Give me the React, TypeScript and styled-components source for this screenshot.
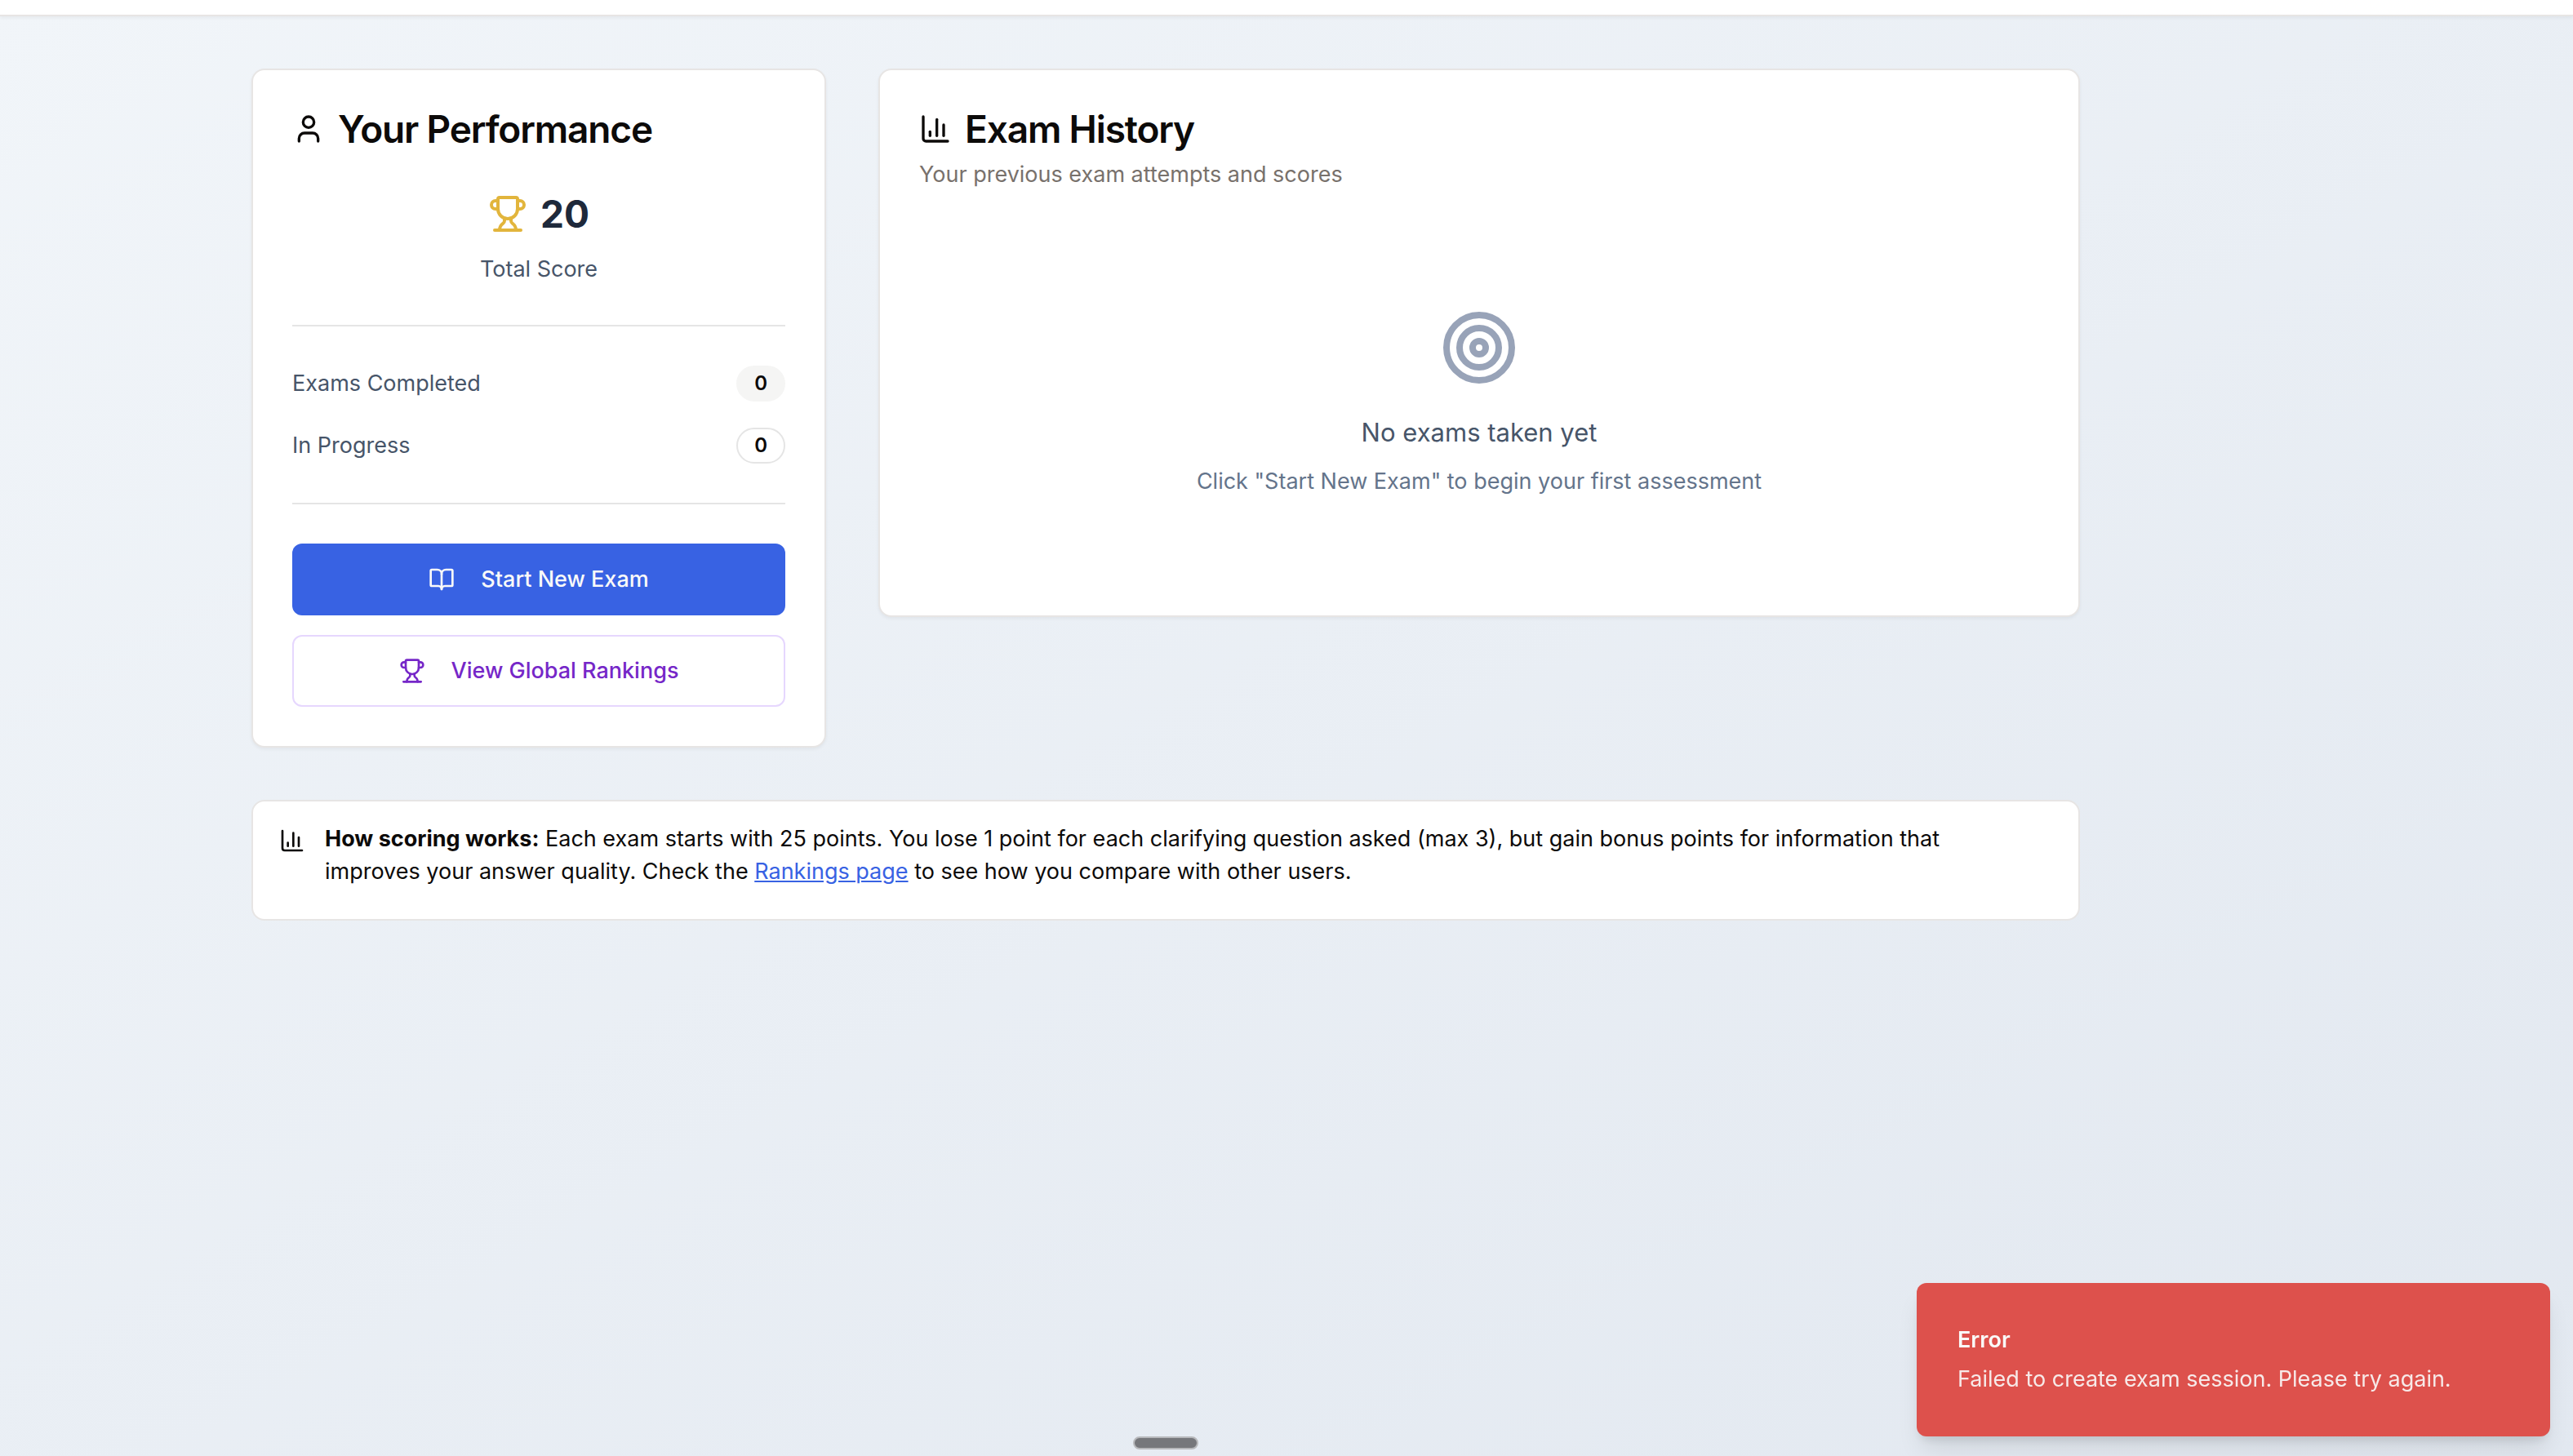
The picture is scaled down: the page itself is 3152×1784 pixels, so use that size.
import React from "react";
import styled, { createGlobalStyle, css } from "styled-components";
import { BookOpen, ChartColumn, Target, Trophy, User } from "lucide-react";

const GlobalStyle = createGlobalStyle`
  *, *::before, *::after { box-sizing: border-box; }
  body {
    margin: 0;
    color: #0c0a09;
    font-family: Inter, "Liberation Sans", sans-serif;
    font-size: 27px;
    line-height: 40px;
  }
  h1, h2, p { margin: 0; }
`;

const Page = styled.div`
  display: flex;
  flex-direction: column;
  min-height: 100vh;
  background: linear-gradient(to bottom right, #f1f5f9, #e2e8f0);
`;

const TopBar = styled.header`
  height: 20px;
  background: #fff;
  border-bottom: 2px solid #e7e5e4;
  box-shadow: 0 2px 4px rgba(0, 0, 0, 0.05);
`;

const Main = styled.main`
  width: 100%;
  padding: 64px 296px 64px 0;
`;

const Container = styled.div`
  display: grid;
  gap: 64px;
  max-width: 2240px;
  margin: 0 auto;
`;

const Columns = styled.div`
  display: grid;
  grid-template-columns: repeat(3, minmax(0, 1fr));
  align-items: start;
  gap: 64px;
`;

const Card = styled.section<{ $span?: number }>`
  grid-column: span ${(p) => p.$span ?? 1};
  display: flex;
  flex-direction: column;
  gap: 48px;
  padding: 48px;
  background: #fff;
  border: 2px solid #e7e5e4;
  border-radius: 16px;
  box-shadow: 0 2px 4px rgba(0, 0, 0, 0.05);
`;

const CardHeader = styled.div`
  display: grid;
  gap: 12px;
`;

const CardTitle = styled.h2`
  display: flex;
  align-items: center;
  gap: 16px;
  font-size: 46px;
  font-weight: 600;
  line-height: 48px;
  letter-spacing: -0.025em;
`;

const CardDescription = styled.p`
  color: #78716c;
`;

const Score = styled.div`
  display: grid;
  justify-items: center;
  gap: 16px;
`;

const ScoreValue = styled.div`
  display: flex;
  align-items: center;
  gap: 16px;
  color: #1e293b;
  font-size: 46px;
  font-weight: 700;
  line-height: 64px;

  svg { color: #e2b53c; }
`;

const Muted = styled.span`
  color: #475569;
`;

const Divider = styled.hr`
  width: 100%;
  height: 2px;
  margin: 0;
  border: 0;
  background: #e5e5e5;
`;

const Stats = styled.div`
  display: grid;
  gap: 32px;
`;

const StatRow = styled.div`
  display: flex;
  align-items: center;
  justify-content: space-between;
`;

const Badge = styled.span<{ $outline?: boolean }>`
  padding: 4px 20px;
  border: 2px solid ${(p) => (p.$outline ? "#e5e5e5" : "#f5f5f4")};
  border-radius: 22px;
  background: ${(p) => (p.$outline ? "#fff" : "#f5f5f4")};
  font-size: 24px;
  font-weight: 600;
  line-height: 32px;
`;

const Actions = styled.div`
  display: grid;
  gap: 24px;
`;

const Button = styled.button<{ $variant: "primary" | "outline" }>`
  display: flex;
  align-items: center;
  justify-content: center;
  gap: 32px;
  height: 88px;
  padding: 0 32px;
  border-radius: 12px;
  font: inherit;
  font-weight: 500;
  cursor: pointer;
  ${(p) =>
    p.$variant === "primary"
      ? css`
          border: 0;
          background: #3862e3;
          color: #fafaf9;
        `
      : css`
          border: 2px solid #e6d7fe;
          background: #fff;
          color: #7627c8;
        `}
`;

const EmptyState = styled.div`
  display: grid;
  justify-items: center;
  gap: 16px;
  padding: 96px 0;
  text-align: center;

  svg { margin-bottom: 16px; color: #98a3b8; }
`;

const EmptyTitle = styled.p`
  color: #475569;
  font-size: 31px;
  line-height: 48px;
`;

const EmptyHint = styled.p`
  color: #64748b;
`;

const Notice = styled.aside`
  display: flex;
  gap: 24px;
  padding: 26px 64px 38px 32px;
  background: #fff;
  border: 2px solid #e7e5e4;
  border-radius: 16px;

  svg { flex: none; margin-top: 6px; }
`;

const NoticeLink = styled.a`
  color: #3862e3;
  text-decoration: underline;
`;

const Toast = styled.div`
  position: fixed;
  right: 28px;
  bottom: 24px;
  display: grid;
  gap: 8px;
  width: 776px;
  max-width: calc(100vw - 56px);
  padding: 50px;
  border-radius: 12px;
  background: #dd514c;
  color: #fafaf9;
  box-shadow: 0 20px 30px -6px rgba(0, 0, 0, 0.1), 0 8px 12px -4px rgba(0, 0, 0, 0.1);
`;

const ToastTitle = styled.strong`
  font-weight: 600;
`;

const ToastText = styled.p`
  opacity: 0.9;
`;

const Handle = styled.div`
  position: fixed;
  bottom: 8px;
  left: calc(50% - 188px);
  width: 80px;
  height: 16px;
  border: 2px solid #b8b9bc;
  border-radius: 8px;
  background: #76777b;
`;

export default function App() {
  return (
    <Page>
      <GlobalStyle />
      <TopBar />
      <Main>
        <Container>
          <Columns>
            <Card>
              <CardHeader>
                <CardTitle>
                  <User size={40} />
                  Your Performance
                </CardTitle>
              </CardHeader>
              <Score>
                <ScoreValue>
                  <Trophy size={48} />
                  20
                </ScoreValue>
                <Muted>Total Score</Muted>
              </Score>
              <Divider />
              <Stats>
                <StatRow>
                  <Muted>Exams Completed</Muted>
                  <Badge>0</Badge>
                </StatRow>
                <StatRow>
                  <Muted>In Progress</Muted>
                  <Badge $outline>0</Badge>
                </StatRow>
              </Stats>
              <Divider />
              <Actions>
                <Button type="button" $variant="primary">
                  <BookOpen size={32} />
                  Start New Exam
                </Button>
                <Button type="button" $variant="outline">
                  <Trophy size={32} />
                  View Global Rankings
                </Button>
              </Actions>
            </Card>

            <Card $span={2}>
              <CardHeader>
                <CardTitle>
                  <ChartColumn size={40} />
                  Exam History
                </CardTitle>
                <CardDescription>Your previous exam attempts and scores</CardDescription>
              </CardHeader>
              <EmptyState>
                <Target size={96} />
                <EmptyTitle>No exams taken yet</EmptyTitle>
                <EmptyHint>Click "Start New Exam" to begin your first assessment</EmptyHint>
              </EmptyState>
            </Card>
          </Columns>

          <Notice>
            <ChartColumn size={32} />
            <p>
              <strong>How scoring works:</strong> Each exam starts with 25 points. You lose 1 point
              for each clarifying question asked (max 3), but gain bonus points for information that
              improves your answer quality. Check the <NoticeLink href="#rankings">Rankings page</NoticeLink>{" "}
              to see how you compare with other users.
            </p>
          </Notice>
        </Container>
      </Main>

      <Toast role="alert">
        <ToastTitle>Error</ToastTitle>
        <ToastText>Failed to create exam session. Please try again.</ToastText>
      </Toast>
      <Handle />
    </Page>
  );
}
